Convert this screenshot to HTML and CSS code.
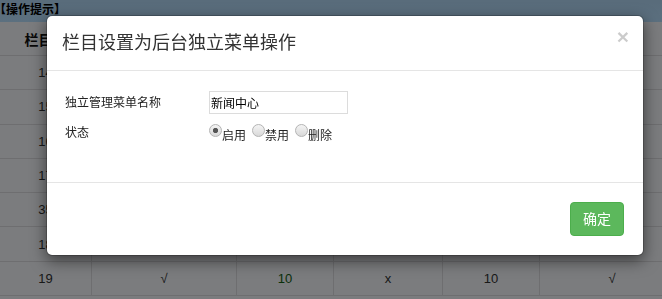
FILE: index.html
```html
<!DOCTYPE html>
<html lang="zh-cn">
<head>
    <meta charset="utf-8">
    <title>栏目管理</title>
    <link rel="stylesheet" href="styles.css">
</head>
<body>
<div class="page">
    <div class="tips"><span>【操作提示】</span></div>
    <table class="list">
        <tr>
            <th class="c1">栏目ID</th>
            <th class="c2"></th>
            <th class="c3"></th>
            <th class="c4"></th>
            <th class="c5"></th>
            <th class="c6"></th>
        </tr>
        <tr><td>14</td><td>√</td><td class="num">10</td><td>x</td><td>10</td><td>√</td></tr>
        <tr><td>15</td><td>√</td><td class="num">10</td><td>x</td><td>10</td><td>√</td></tr>
        <tr><td>16</td><td>√</td><td class="num">10</td><td>x</td><td>10</td><td>√</td></tr>
        <tr><td>17</td><td>√</td><td class="num">10</td><td>x</td><td>10</td><td>√</td></tr>
        <tr><td>35</td><td>√</td><td class="num">10</td><td>x</td><td>10</td><td>√</td></tr>
        <tr><td>18</td><td>√</td><td class="num">10</td><td>x</td><td>10</td><td>√</td></tr>
        <tr><td>19</td><td>√</td><td class="num">10</td><td>x</td><td>10</td><td>√</td></tr>
    </table>
</div>

<!-- 遮罩层 -->
<div class="backdrop"></div>

<!-- 弹出框 -->
<div class="modal">
    <div class="modal-header">
        <h4 class="modal-title">栏目设置为后台独立菜单操作</h4>
        <span class="close">&times;</span>
    </div>
    <div class="modal-body">
        <div class="form-row">
            <label class="form-label">独立管理菜单名称</label>
            <input class="form-input" type="text" value="新闻中心">
        </div>
        <div class="form-row form-row-top">
            <label class="form-label">状态</label>
            <div class="radios">
                <label class="radio"><input type="radio" name="status" checked><span>启用</span></label>
                <label class="radio"><input type="radio" name="status"><span>禁用</span></label>
                <label class="radio"><input type="radio" name="status"><span>删除</span></label>
            </div>
        </div>
    </div>
    <div class="modal-footer">
        <button class="btn-success" type="button">确定</button>
    </div>
</div>
</body>
</html>
```

FILE: styles.css
```css
html, body {
    margin: 0;
    padding: 0;
    height: 100%;
    overflow: hidden;
}

body {
    font-family: "Liberation Sans", "Noto Sans CJK SC", sans-serif;
    font-size: 12px;
    color: #333;
    background-color: #f6f8fc;
}

/*底层页面*/
.page {
    width: 662px;
    overflow: hidden;
}

.tips {
    height: 22px;
    line-height: 20px;
    background-image: linear-gradient(to bottom, #b2d8f6 0%, #b8e0ff 100%);
    font-weight: bold;
    font-size: 12px;
    color: #000;
    overflow: hidden;
    white-space: nowrap;
}

.tips span {
    margin-left: -6px;
}

.list {
    width: 679px;
    border-collapse: collapse;
    table-layout: fixed;
}

.list th,
.list td {
    height: 33.3px;
    padding: 0;
    text-align: center;
    border-bottom: 1px solid #dcdde0;
    border-left: 1px solid #dcdde0;
    font-size: 13px;
    color: #333;
}

.list th {
    height: 33px;
    font-size: 14px;
    color: #111;
}

.list tr > :first-child {
    border-left: none;
}

.list .num {
    color: #146014;
}

.c1 { width: 91px; }
.c2 { width: 144px; }
.c3 { width: 96px; }
.c4 { width: 108px; }
.c5 { width: 96px; }
.c6 { width: 144px; }

/*遮罩*/
.backdrop {
    position: fixed;
    top: 0;
    left: 0;
    right: 0;
    bottom: 0;
    background-color: rgba(0, 0, 0, .5);
}

/*弹出框*/
.modal {
    position: absolute;
    left: 46px;
    top: 15px;
    width: 598px;
    box-sizing: border-box;
    background-color: #fff;
    border: 1px solid rgba(0, 0, 0, .2);
    border-radius: 6px;
    box-shadow: 0 5px 15px rgba(0, 0, 0, .5);
    background-clip: padding-box;
}

.modal-header {
    display: flex;
    justify-content: space-between;
    padding: 15px;
    border-bottom: 1px solid #e5e5e5;
}

.modal-title {
    margin: 0;
    font-size: 18px;
    line-height: 24px;
    font-weight: normal;
    color: #333;
}

.close {
    margin-top: -5px;
    margin-right: -1px;
    font-size: 21px;
    line-height: 1;
    font-weight: bold;
    color: #000;
    opacity: .2;
    cursor: pointer;
}

.modal-body {
    padding: 20px 15px 40px;
}

.form-row {
    display: flex;
    align-items: center;
    height: 23px;
}

.form-row-top {
    align-items: flex-start;
    height: 18px;
    margin-top: 10px;
}

.form-label {
    width: 147px;
    padding-left: 3px;
    box-sizing: border-box;
    font-size: 12px;
    line-height: 14px;
    color: #222;
}

.form-row-top .form-label {
    padding-top: 2px;
}

.form-input {
    width: 139px;
    height: 23px;
    box-sizing: border-box;
    margin: 0;
    padding: 0 1px;
    border: 1px solid #dcdcdc;
    font-family: "Liberation Sans", "Noto Sans CJK SC", sans-serif;
    font-size: 12px;
    color: #000;
    outline: none;
}

.radios {
    display: flex;
    gap: 6px;
}

.radio {
    display: flex;
    align-items: flex-start;
    cursor: pointer;
}

.radio span {
    padding-top: 5px;
    line-height: 14px;
    font-size: 12px;
    color: #222;
}

.radio input {
    -webkit-appearance: none;
    appearance: none;
    width: 13px;
    height: 13px;
    margin: 0;
    box-sizing: border-box;
    border: 1px solid #b4b4b4;
    border-radius: 50%;
    background: linear-gradient(to bottom, #f4f4f4 0%, #d9d9d9 100%);
}

.radio input:checked {
    background: radial-gradient(circle, #555 0, #555 2.2px, transparent 3px),
                linear-gradient(to bottom, #f4f4f4 0%, #d9d9d9 100%);
}

.modal-footer {
    display: flex;
    justify-content: flex-end;
    padding: 19px;
    border-top: 1px solid #e5e5e5;
}

.btn-success {
    padding: 6px 12px;
    font-family: "Liberation Sans", "Noto Sans CJK SC", sans-serif;
    font-size: 14px;
    line-height: 20px;
    color: #fff;
    background-color: #5cb85c;
    border: 1px solid #4cae4c;
    border-radius: 4px;
    cursor: pointer;
}
```
